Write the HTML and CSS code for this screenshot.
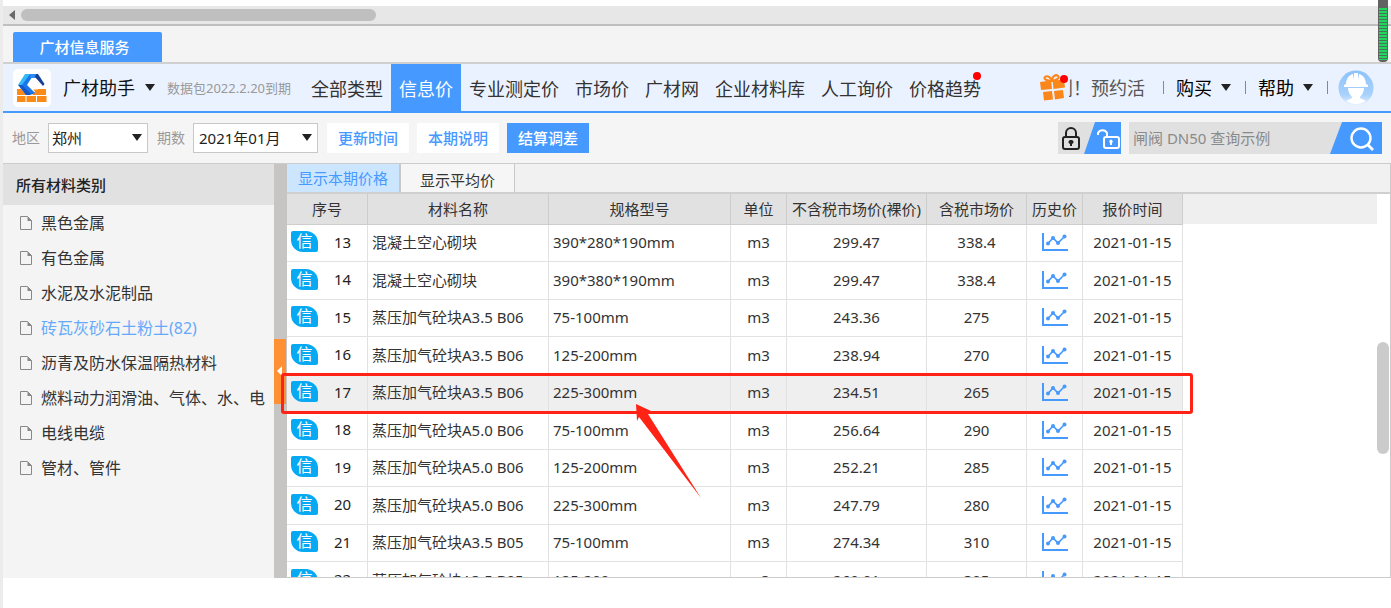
FILE: index.html
```html
<!DOCTYPE html>
<html lang="zh-CN">
<head>
<meta charset="utf-8">
<title>广材信息服务</title>
<link rel="stylesheet" href="styles.css">
</head>
<body>
<svg class="defs" aria-hidden="true">
  <symbol id="caret" viewBox="0 0 10 7"><path d="M0 0h10L5 7z" fill="#222"/></symbol>
  <symbol id="doc" viewBox="0 0 14 16"><path d="M1.500 1.500h7l4 4v9h-11z" fill="none" stroke="#888"/><path d="M8.500 1.500v4.500H13z" fill="#888"/></symbol>
  <symbol id="chart" viewBox="0 0 26 18"><path d="M1 0v17h25" fill="none" stroke="#4699ff" stroke-width="2"/><path d="M6 10.500L11 5l5 5 6.500-6.500" fill="none" stroke="#4699ff" stroke-width="1.600"/><g fill="#4699ff"><circle cx="6" cy="10.500" r="2"/><circle cx="11" cy="5" r="2"/><circle cx="16" cy="10" r="2"/><circle cx="22.500" cy="3.500" r="2"/></g></symbol>
</svg>

<div class="app">
  <div class="hscroll">
    <svg class="hscroll-arrow" viewBox="0 0 6 10"><path d="M6 0v10L0 5z" fill="#6b6b6b"/></svg>
    <div class="hscroll-thumb"></div>
  </div>
  <div class="doc-tabs"><button class="doc-tab">广材信息服务</button></div>

  <header class="topbar">
    <svg class="logo" viewBox="0 0 38 38">
      <rect width="38" height="38" rx="5" fill="#fff"/>
      <path d="M4 20h29v6H4zM4 27h8.500v6H4zM13.500 27h9.500v6h-9.500zM24 27h9.500v6H24z" fill="#fb8a17"/>
      <path d="M12 8l8 1 2 10 3 1-6 6h-5L8 20z" fill="#fff"/>
      <path d="M12 5h6l-7 11H5z" fill="#35b9f7"/>
      <path d="M5 16h6l11 8-5 2h-4z" fill="#1556c8"/>
      <path d="M17 5h4l-7 11 8 8-4 1-9-9z" fill="#1b76ee"/>
      <path d="M16 5h8l-1.500 4H18z" fill="#2f8cf5"/>
      <path d="M23 5h2l6.500 10-1.500 2-8-9z" fill="#173f93"/>
      <path d="M20.500 20.500h4l-2 3z" fill="#fb8a17"/>
    </svg>
    <button class="brand">广材助手 <svg class="caret"><use href="#caret"/></svg></button>
    <span class="expiry">数据包2022.2.20到期</span>
    <nav class="nav">
      <a href="#">全部类型</a>
      <a href="#" class="active">信息价</a>
      <a href="#">专业测定价</a>
      <a href="#">市场价</a>
      <a href="#">广材网</a>
      <a href="#">企业材料库</a>
      <a href="#">人工询价</a>
      <a href="#" class="has-dot">价格趋势</a>
    </nav>
    <div class="account">
      <svg class="gift" viewBox="0 0 30 28">
        <g fill="none" stroke="#fb861a" stroke-width="2"><path d="M13 7C8 7 4 5 6 3s6 0 7 4zM13 7c0-5 4-7 6-5s-1 4-6 5z"/></g>
        <g fill="#fb861a"><path d="M1 8l11-1.500 1 8.500-11 1zM13.500 6.500L25 5.500l1 8-11.500 1.500zM4 18l9-1 1 8.500-9 1zM15 17l9-1 1 8-9 1.500z"/></g>
        <circle cx="25" cy="5" r="4" fill="#f00"/>
      </svg>
      <a href="#" class="ticker"><span>划！预约活</span></a>
      <i class="sep"></i>
      <button class="menu">购买 <svg class="caret"><use href="#caret"/></svg></button>
      <i class="sep"></i>
      <button class="menu">帮助 <svg class="caret"><use href="#caret"/></svg></button>
      <i class="sep"></i>
      <svg class="avatar" viewBox="0 0 36 36">
        <defs><linearGradient id="sky" x1="0" y1="0" x2="0" y2="1"><stop offset="0" stop-color="#8dc2fb"/><stop offset=".7" stop-color="#a9d2fc"/><stop offset="1" stop-color="#eaf3ff"/></linearGradient></defs>
        <circle cx="18" cy="18" r="17.500" fill="url(#sky)"/>
        <path d="M8 14c0-5 3-9 7-10l1 6V3h4v7l1-6c4 1 7 5 7 10l2 1v2H6v-2z" fill="#fff"/>
        <path d="M10 18h16c0 4-2 7-4 9v1l6 3c-6 4-14 4-20 0l6-3v-1c-2-2-4-5-4-9z" fill="#fff"/>
      </svg>
    </div>
  </header>

  <div class="toolbar">
    <label for="area">地区</label>
    <span class="select area"><select id="area"><option>郑州</option></select><svg class="caret"><use href="#caret"/></svg></span>
    <label for="period">期数</label>
    <span class="select period"><select id="period"><option>2021年01月</option></select><svg class="caret"><use href="#caret"/></svg></span>
    <button class="btn">更新时间</button>
    <button class="btn">本期说明</button>
    <button class="btn primary">结算调差</button>
    <button class="lock" aria-label="锁定">
      <svg viewBox="0 0 63 32">
        <rect width="63" height="32" fill="#e0e0e0"/>
        <path d="M37 0h26v32H26z" fill="#4699ff"/>
        <g fill="none" stroke="#222" stroke-width="2"><rect x="5" y="15" width="16" height="12" rx="2"/><path d="M8 15v-4a5 5 0 0 1 10 0v4"/></g>
        <path d="M13 18a2 2 0 0 1 1 4v2h-2v-2a2 2 0 0 1 1-4z" fill="#222"/>
        <g fill="none" stroke="#fff" stroke-width="2"><rect x="46" y="15" width="15" height="11" rx="2"/><path d="M40 13v-2a5 5 0 0 1 9 0v4"/></g>
        <path d="M53 17.500a2 2 0 0 1 1 3.500v2h-2v-2a2 2 0 0 1 1-3.500z" fill="#fff"/>
      </svg>
    </button>
    <form class="search">
      <input type="text" aria-label="搜索" placeholder="闸阀 DN50 查询示例">
      <button type="button" aria-label="查询"><svg viewBox="0 0 52 32"><path d="M12 0h40v32H0z" fill="#4699ff"/><circle cx="31" cy="16" r="9.500" fill="none" stroke="#fff" stroke-width="2.400"/><path d="M37.500 22.500l5.500 5.500" stroke="#fff" stroke-width="2.800"/></svg></button>
    </form>
  </div>

  <main class="main">
    <aside class="sidebar">
      <h2>所有材料类别</h2>
      <ul>
        <li><a href="#"><svg><use href="#doc"/></svg>黑色金属</a></li>
        <li><a href="#"><svg><use href="#doc"/></svg>有色金属</a></li>
        <li><a href="#"><svg><use href="#doc"/></svg>水泥及水泥制品</a></li>
        <li><a href="#" class="current"><svg><use href="#doc"/></svg>砖瓦灰砂石土粉土(82)</a></li>
        <li><a href="#"><svg><use href="#doc"/></svg>沥青及防水保温隔热材料</a></li>
        <li><a href="#"><svg><use href="#doc"/></svg>燃料动力润滑油、气体、水、电</a></li>
        <li><a href="#"><svg><use href="#doc"/></svg>电线电缆</a></li>
        <li><a href="#"><svg><use href="#doc"/></svg>管材、管件</a></li>
      </ul>
    </aside>
    <div class="splitter"><button aria-label="收起"><svg viewBox="0 0 5 10"><path d="M5 0v10L0 5z" fill="#fff"/></svg></button></div>
    <section class="content">
      <div class="view-tabs">
        <button class="selected">显示本期价格</button>
        <button>显示平均价</button>
      </div>
      <div class="grid">
        <table>
          <colgroup><col class="c-no"><col class="c-name"><col class="c-spec"><col class="c-unit"><col class="c-net"><col class="c-gross"><col class="c-hist"><col class="c-date"></colgroup>
          <thead><tr><th>序号</th><th>材料名称</th><th>规格型号</th><th>单位</th><th>不含税市场价(裸价)</th><th>含税市场价</th><th>历史价</th><th>报价时间</th></tr></thead>
          <tbody>
            <tr><td><span class="no"><b>信</b>13</span></td><td>混凝土空心砌块</td><td>390*280*190mm</td><td>m3</td><td>299.47</td><td>338.4</td><td><svg class="chart"><use href="#chart"/></svg></td><td>2021-01-15</td></tr>
            <tr><td><span class="no"><b>信</b>14</span></td><td>混凝土空心砌块</td><td>390*380*190mm</td><td>m3</td><td>299.47</td><td>338.4</td><td><svg class="chart"><use href="#chart"/></svg></td><td>2021-01-15</td></tr>
            <tr><td><span class="no"><b>信</b>15</span></td><td>蒸压加气砼块A3.5 B06</td><td>75-100mm</td><td>m3</td><td>243.36</td><td>275</td><td><svg class="chart"><use href="#chart"/></svg></td><td>2021-01-15</td></tr>
            <tr><td><span class="no"><b>信</b>16</span></td><td>蒸压加气砼块A3.5 B06</td><td>125-200mm</td><td>m3</td><td>238.94</td><td>270</td><td><svg class="chart"><use href="#chart"/></svg></td><td>2021-01-15</td></tr>
            <tr class="hover"><td><span class="no"><b>信</b>17</span></td><td>蒸压加气砼块A3.5 B06</td><td>225-300mm</td><td>m3</td><td>234.51</td><td>265</td><td><svg class="chart"><use href="#chart"/></svg></td><td>2021-01-15</td></tr>
            <tr><td><span class="no"><b>信</b>18</span></td><td>蒸压加气砼块A5.0 B06</td><td>75-100mm</td><td>m3</td><td>256.64</td><td>290</td><td><svg class="chart"><use href="#chart"/></svg></td><td>2021-01-15</td></tr>
            <tr><td><span class="no"><b>信</b>19</span></td><td>蒸压加气砼块A5.0 B06</td><td>125-200mm</td><td>m3</td><td>252.21</td><td>285</td><td><svg class="chart"><use href="#chart"/></svg></td><td>2021-01-15</td></tr>
            <tr><td><span class="no"><b>信</b>20</span></td><td>蒸压加气砼块A5.0 B06</td><td>225-300mm</td><td>m3</td><td>247.79</td><td>280</td><td><svg class="chart"><use href="#chart"/></svg></td><td>2021-01-15</td></tr>
            <tr><td><span class="no"><b>信</b>21</span></td><td>蒸压加气砼块A3.5 B05</td><td>75-100mm</td><td>m3</td><td>274.34</td><td>310</td><td><svg class="chart"><use href="#chart"/></svg></td><td>2021-01-15</td></tr>
            <tr><td><span class="no"><b>信</b>22</span></td><td>蒸压加气砼块A3.5 B05</td><td>125-200mm</td><td>m3</td><td>269.91</td><td>305</td><td><svg class="chart"><use href="#chart"/></svg></td><td>2021-01-15</td></tr>
          </tbody>
        </table>
      </div>
      <div class="vthumb"></div>
      <div class="mark-box"></div>
      <svg class="mark-arrow" viewBox="0 0 66 95"><path d="M0 0l15 7-3 3 53 84L3 13l-2 4z" fill="#ff2315"/></svg>
    </section>
  </main>
  <div class="meter"><div class="meter-level"></div></div>
</div>
</body>
</html>
```
FILE: styles.css
```css
* { box-sizing: border-box; }
body {
  margin: 0;
  font-family: "Noto Sans", "Noto Sans CJK SC", sans-serif;
  font-size: 15px;
  line-height: 20px;
  color: #333;
  background: #fff;
}
button, input, select { font: inherit; color: inherit; border: 0; margin: 0; padding: 0; background: none; border-radius: 0; }
a { color: inherit; text-decoration: none; }
svg { display: block; flex: none; }
.defs { position: absolute; width: 0; height: 0; }
.caret { width: 10px; height: 7px; }

.app {
  position: relative;
  display: flex;
  flex-direction: column;
  height: 100vh;
  overflow: hidden;
  border-left: 3px solid #ececec;
  padding: 6px 0 30px;
}

.hscroll { display: flex; align-items: center; flex: none; gap: 6px; height: 20px; padding-left: 6px; background: #e7e7e7; border-bottom: 2px solid #bfbfbf; }
.hscroll-arrow { width: 6px; height: 10px; }
.hscroll-thumb { width: 355px; height: 12px; border-radius: 6px; background: #bfbfbf; }

.doc-tabs { display: flex; align-items: flex-end; flex: none; height: 38px; padding-left: 10px; background: #f4f4f4; border-bottom: 2px solid #d0d0d0; }
.doc-tab { width: 149px; height: 30px; padding-right: 6px; color: #fff; font-weight: 500; background: #4699ff; border-radius: 2px 2px 0 0; }

.topbar { display: flex; align-items: center; flex: none; height: 49px; padding: 0 17px 0 10px; background: #ebf2ff; border-bottom: 2px solid #4699ff; font-size: 18px; }
.logo { width: 38px; height: 38px; }
.brand { display: flex; align-items: center; gap: 10px; margin-left: 12px; color: #111; }
.expiry { margin-left: 12px; font-size: 13px; color: #999; white-space: nowrap; }
.nav { display: flex; align-self: stretch; margin-left: 12px; white-space: nowrap; }
.nav a { display: flex; align-items: center; padding: 3px 8px 0; }
.nav .active { color: #fff; background: #4699ff; }
.has-dot { position: relative; }
.has-dot::after { content: ""; position: absolute; top: 8px; right: 8px; width: 8px; height: 8px; border-radius: 50%; background: #f00; }
.account { display: flex; align-items: center; margin-left: auto; white-space: nowrap; }
.gift { width: 30px; height: 28px; }
.ticker { display: flex; justify-content: flex-end; width: 76px; margin-right: 18px; overflow: hidden; color: #555; }
.sep { width: 1px; height: 13px; margin-right: 12px; background: #888; }
.sep:last-of-type { margin-right: 10px; }
.menu { display: flex; align-items: center; gap: 9px; margin-right: 14px; color: #000; }
.avatar { width: 36px; height: 36px; }

.toolbar { display: flex; align-items: center; flex: none; height: 51px; padding: 0 9px; background: #f5f5f5; border-bottom: 1px solid #ccc; }
.toolbar label { font-size: 14px; color: #999; }
.select { position: relative; height: 30px; margin: 0 9px 0 8px; }
.select select { width: 100%; height: 100%; padding-left: 3px; appearance: none; border: 1px solid #c8c8c8; background: #fff; color: #222; }
.select .caret { position: absolute; right: 6px; top: 11px; pointer-events: none; }
.area { width: 100px; }
.period { width: 125px; }
.period select { padding-left: 5px; }
.btn { width: 82px; height: 30px; margin-right: 8px; background: #fff; color: #4699ff; font-weight: 500; }
.btn.primary { background: #4699ff; color: #fff; }
.lock { margin-left: auto; }
.lock svg { width: 63px; height: 32px; }
.search { display: flex; margin-left: 8px; height: 32px; background: #e0e0e0; }
.search input { width: 201px; padding-left: 4px; }
.search input::placeholder { color: #8a8a8a; opacity: 1; }
.search button svg { width: 52px; height: 32px; }

.main { display: flex; flex: 1; min-height: 0; }
.sidebar { flex: none; width: 271px; overflow: hidden; background: #f4f4f4; }
.sidebar h2 { margin: 0; padding: 11px 13px 10px; font-size: 15px; line-height: 20px; font-weight: 500; color: #222; background: #e1e1e1; }
.sidebar ul { margin: 0; padding: 0; list-style: none; }
.sidebar a { display: flex; align-items: center; gap: 8px; height: 35px; padding-left: 16px; font-size: 16px; white-space: nowrap; }
.sidebar svg { width: 14px; height: 16px; }
.sidebar .current { color: #66a9fb; }
.splitter { display: flex; align-items: center; flex: none; width: 13px; background: #c7c5c4; }
.splitter button { display: flex; align-items: center; width: 12px; height: 65px; padding-left: 3px; background: #ff9033; }
.splitter svg { width: 5px; height: 10px; }

.content { position: relative; display: flex; flex-direction: column; flex: 1; min-width: 0; border-right: 1px solid #ccc; border-bottom: 1px solid #ccc; }
.view-tabs { display: flex; flex: none; height: 30px; background: #f1f1f1; border-bottom: 2px solid #d0d0d0; }
.view-tabs button { width: 114px; border-right: 1px solid #c8c8c8; background: #f6f6f6; padding-top: 3px; }
.view-tabs .selected { border-right-width: 2px; padding-top: 0; color: #4699ff; background: #cce6ff; }
.grid { flex: 1; min-height: 0; margin-right: 13px; overflow: hidden; background: linear-gradient(#efefef 30px, #fff 30px); }
table { width: 896px; table-layout: fixed; border-collapse: separate; border-spacing: 0; background: #fff; }
.c-no { width: 81px; } .c-name { width: 181px; } .c-spec { width: 182px; } .c-unit { width: 56px; }
.c-net { width: 140px; } .c-gross { width: 100px; } .c-hist { width: 56px; } .c-date { width: 100px; }
th, td { padding: 0; border-right: 1px solid #e2e2e2; border-bottom: 1px solid #e2e2e2; text-align: center; white-space: nowrap; }
th { height: 31px; font-weight: 400; background: #e1e1e1; border-color: #cdcdcd; }
td { height: 38px; padding-bottom: 2px; }
tr:nth-child(odd) td { height: 37px; }
td:nth-child(2), td:nth-child(3) { padding-left: 4px; text-align: left; }
.hover td { background: #efefef; }
.no { display: flex; align-items: center; gap: 16px; padding: 0 0 1px 4px; color: #222; }
.no b { width: 27px; height: 21px; font-weight: 400; font-size: 16px; line-height: 21px; color: #fff; background: #06a9f2; border-radius: 2px 12px 2px 12px; }
.chart { width: 26px; height: 18px; margin: 0 auto; }

.vthumb { position: absolute; top: 178px; right: 1px; width: 12px; height: 112px; border-radius: 6px; background: #cbcbcb; }
.mark-box { position: absolute; top: 209px; left: -6px; width: 912px; height: 41px; border: 3px solid #ff2315; border-radius: 3px; }
.mark-arrow { position: absolute; top: 240px; left: 349px; width: 66px; height: 95px; }

.meter { position: absolute; top: 0; right: 3px; width: 10px; height: 62px; padding: 8px 1px 2px; border-radius: 0 0 4px 4px; background: #626262; }
.meter-level { height: 100%; background: repeating-linear-gradient(#20d65c 0 2px, #49705a 2px 3px); }
```
